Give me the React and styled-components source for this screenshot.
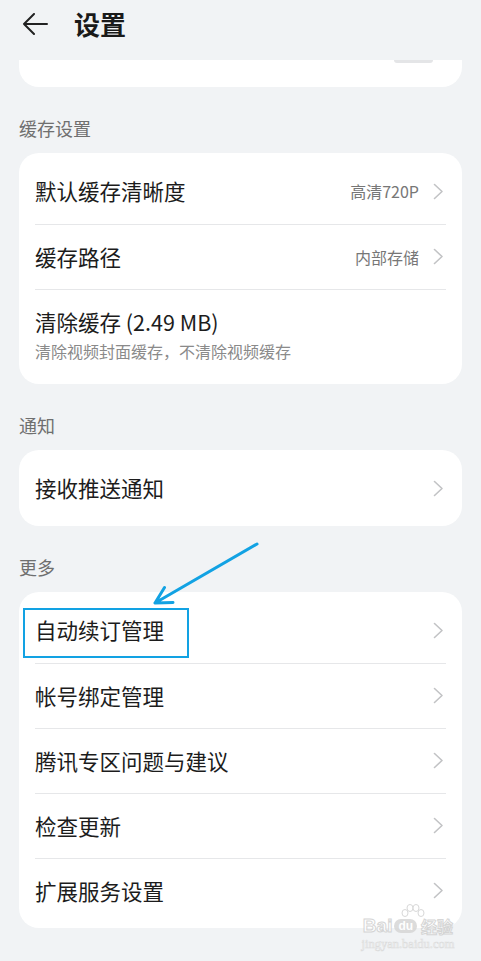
import React from "react";
import styled, { createGlobalStyle } from "styled-components";

const GlobalStyle = createGlobalStyle`
  body {
    margin: 0;
    background: #f1f3f5;
    font-family: "Noto Sans CJK SC", "Noto Sans", sans-serif;
  }
`;

const Page = styled.div`
  position: relative;
  width: 481px;
  height: 961px;
  overflow: hidden;
  background: #f1f3f5;
`;

const Header = styled.div`
  height: 48px;
  margin-bottom: 12px;
  display: flex;
  align-items: center;
  padding-left: 22px;
  gap: 26px;
`;

const Title = styled.h1`
  margin: 0;
  font-size: 26px;
  font-weight: 700;
  color: #1a1a1a;
  line-height: 1;
`;

const ClippedCard = styled.div`
  margin: 0 19px;
  height: 27px;
  background: #fff;
  border-radius: 0 0 20px 20px;
  display: flex;
  justify-content: flex-end;
  padding-right: 29px;
`;

const SwitchEdge = styled.div`
  width: 39px;
  height: 3px;
  background: #e4e5e7;
  border-radius: 0 0 12px 12px;
`;

const SectionLabel = styled.div`
  padding: 29px 19px 13px;
  font-size: 18px;
  line-height: 24px;
  color: #6f6f6f;
`;

const Card = styled.div`
  margin: 0 19px;
  background: #fff;
  border-radius: 20px;
  padding: 5.5px 0;
`;

const Row = styled.div`
  box-sizing: border-box;
  margin: 0 16px;
  height: ${(p) => (p.$tall ? "90px" : "65px")};
  display: flex;
  align-items: center;
  & + & {
    border-top: 1px solid #e6e7e9;
  }
`;

const RowText = styled.div`
  flex: 1;
  display: flex;
  flex-direction: column;
`;

const RowTitle = styled.span`
  font-size: 21.5px;
  line-height: 28px;
  color: #1c1c1c;
`;

const RowSub = styled.span`
  font-size: 16px;
  line-height: 20px;
  color: #8a8a8a;
  margin-top: 5px;
`;

const RowValue = styled.span`
  font-size: 16px;
  color: #777;
  margin-right: 14px;
`;

const Chevron = () => (
  <svg width="11" height="17" viewBox="0 0 11 17" style={{ marginRight: 2 }}>
    <polyline
      points="1.5,1.5 9,8.5 1.5,15.5"
      fill="none"
      stroke="#c2c3c5"
      strokeWidth="1.6"
      strokeLinecap="round"
      strokeLinejoin="round"
    />
  </svg>
);

const BackArrow = () => (
  <svg width="26" height="22" viewBox="0 0 26 22">
    <path
      d="M25 11H2 M12 1L2 11L12 21"
      fill="none"
      stroke="#222"
      strokeWidth="2"
      strokeLinecap="round"
      strokeLinejoin="round"
    />
  </svg>
);

const Highlight = styled.div`
  position: absolute;
  left: 23px;
  top: 608px;
  width: 162px;
  height: 46px;
  border: 2px solid #12a2e3;
`;

const ArrowMark = styled.svg`
  position: absolute;
  left: 150px;
  top: 538px;
`;

const Watermark = styled.div`
  position: absolute;
  left: 362px;
  top: 904px;
  width: 92px;
  display: flex;
  flex-direction: column;
  align-items: center;
  opacity: 0.85;
`;

const Paw = styled.svg`
  margin-left: 10px;
  margin-bottom: -3px;
`;

const WmMain = styled.div`
  display: flex;
  align-items: center;
  gap: 2px;
  font-family: "Liberation Sans", sans-serif;
  font-weight: 700;
  font-size: 19px;
  line-height: 18px;
  color: #fff;
  -webkit-text-stroke: 1px #cfcfcf;
`;

const WmDu = styled.span`
  font-size: 12px;
  line-height: 14px;
  padding: 0 4px;
  border-radius: 8px;
  background: #d6d6d6;
  color: #fff;
  -webkit-text-stroke: 0;
`;

const WmCn = styled.span`
  font-family: "Noto Sans CJK SC", sans-serif;
  font-size: 16px;
  margin-left: 2px;
`;

const WmUrl = styled.div`
  font-family: "Liberation Serif", serif;
  font-size: 12.5px;
  line-height: 14px;
  color: #fff;
  -webkit-text-stroke: 0.6px #d8d8d8;
  margin-top: 2px;
`;

const Item = ({ title, value, sub, tall }) => (
  <Row $tall={tall}>
    <RowText>
      <RowTitle>{title}</RowTitle>
      {sub && <RowSub>{sub}</RowSub>}
    </RowText>
    {value && <RowValue>{value}</RowValue>}
    {!sub && <Chevron />}
  </Row>
);

const App = () => (
  <Page>
    <GlobalStyle />
    <Header>
      <BackArrow />
      <Title>设置</Title>
    </Header>
    <ClippedCard>
      <SwitchEdge />
    </ClippedCard>

    <SectionLabel>缓存设置</SectionLabel>
    <Card>
      <Item title="默认缓存清晰度" value="高清720P" />
      <Item title="缓存路径" value="内部存储" />
      <Item tall title="清除缓存 (2.49 MB)" sub="清除视频封面缓存，不清除视频缓存" />
    </Card>

    <SectionLabel>通知</SectionLabel>
    <Card>
      <Item title="接收推送通知" />
    </Card>

    <SectionLabel>更多</SectionLabel>
    <Card>
      <Item title="自动续订管理" />
      <Item title="帐号绑定管理" />
      <Item title="腾讯专区问题与建议" />
      <Item title="检查更新" />
      <Item title="扩展服务设置" />
    </Card>

    <Highlight />
    <ArrowMark width="115" height="72" viewBox="0 0 115 72">
      <path
        d="M107 6 L5 65 M14.5 49.5 L5 65 L23 64.5"
        fill="none"
        stroke="#12a2e3"
        strokeWidth="3"
        strokeLinecap="round"
        strokeLinejoin="round"
      />
    </ArrowMark>

    <Watermark>
      <Paw width="26" height="16" viewBox="0 0 26 16">
        <g fill="#fff" stroke="#d2d2d2" strokeWidth="1">
          <ellipse cx="5" cy="9" rx="3" ry="3.5" />
          <ellipse cx="10" cy="4" rx="3" ry="3.5" />
          <ellipse cx="16" cy="4" rx="3" ry="3.5" />
          <ellipse cx="21" cy="9" rx="3" ry="3.5" />
        </g>
      </Paw>
      <WmMain>
        Bai<WmDu>du</WmDu>
        <WmCn>经验</WmCn>
      </WmMain>
      <WmUrl>jingyan.baidu.com</WmUrl>
    </Watermark>
  </Page>
);

export default App;
